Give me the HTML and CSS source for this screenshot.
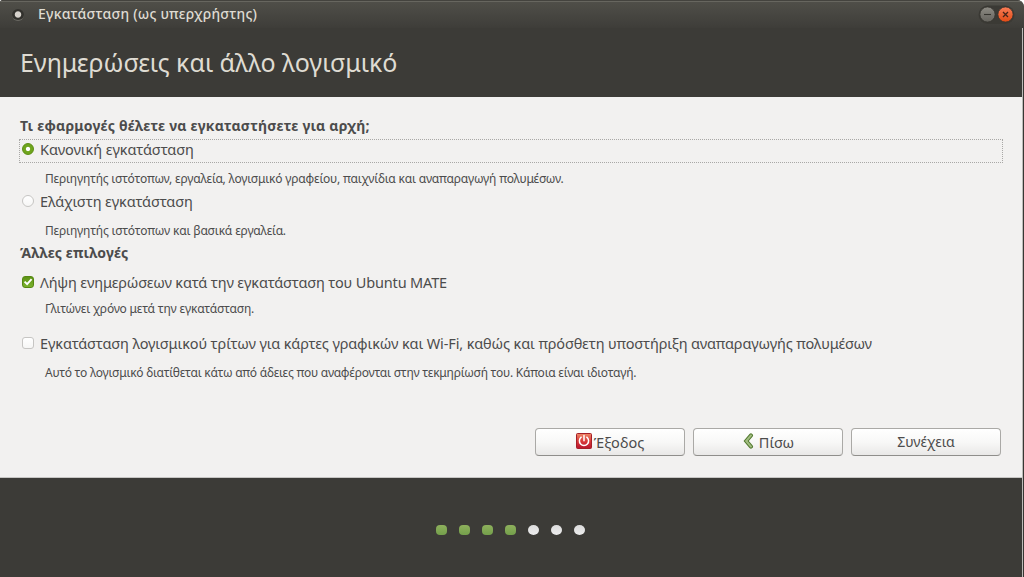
FILE: index.html
```html
<!DOCTYPE html>
<html lang="el">
<head>
<meta charset="utf-8">
<title>Εγκατάσταση (ως υπερχρήστης)</title>
<link rel="stylesheet" href="styles.css">
</head>
<body>
<div class="window">
  <div class="titlebar">
    <span class="menu-dot"></span>
    <span class="caption">Εγκατάσταση (ως υπερχρήστης)</span>
    <svg class="controls" width="40" height="20" viewBox="0 0 40 20">
      <defs>
        <linearGradient id="grey" x1="0" y1="0" x2="0" y2="1"><stop offset="0" stop-color="#8d8b84"/><stop offset="1" stop-color="#65635d"/></linearGradient>
        <linearGradient id="orange" x1="0" y1="0" x2="0" y2="1"><stop offset="0" stop-color="#f97d57"/><stop offset="1" stop-color="#e24a14"/></linearGradient>
      </defs>
      <rect x="1.5" y="0.5" width="36" height="18.5" rx="9.2" fill="#3b3a35"/>
      <circle cx="10.5" cy="9.5" r="7.6" fill="url(#grey)" stroke="#35342f" stroke-width=".8"/>
      <path d="M7 9.5h7" stroke="#35342f" stroke-width="1.1"/>
      <circle cx="28.5" cy="9.5" r="7.6" fill="url(#orange)" stroke="#35342f" stroke-width=".8"/>
      <path d="M26 7l5 5M31 7l-5 5" stroke="#45241a" stroke-width="1.3"/>
    </svg>
  </div>
  <div class="body">
    <header class="header"><h1 class="heading">Ενημερώσεις και άλλο λογισμικό</h1></header>
    <main class="content">
      <h2 class="section apps"><span>Τι εφαρμογές θέλετε να εγκαταστήσετε για αρχή;</span></h2>
      <div class="option focused"><i class="radio on"></i><span class="t-normal">Κανονική εγκατάσταση</span></div>
      <p class="hint h-normal"><span>Περιηγητής ιστότοπων, εργαλεία, λογισμικό γραφείου, παιχνίδια και αναπαραγωγή πολυμέσων.</span></p>
      <div class="option minimal"><i class="radio"></i><span class="t-minimal">Ελάχιστη εγκατάσταση</span></div>
      <p class="hint h-minimal"><span>Περιηγητής ιστότοπων και βασικά εργαλεία.</span></p>
      <h2 class="section other"><span>Άλλες επιλογές</span></h2>
      <div class="option updates">
        <i class="check on"><svg width="12" height="12" viewBox="0 0 12 12"><path d="M2.6 5.6l2.5 2.6 4.5-5" fill="none" stroke="#fff" stroke-width="1.9"/></svg></i>
        <span class="t-updates">Λήψη ενημερώσεων κατά την εγκατάσταση του Ubuntu MATE</span>
      </div>
      <p class="hint h-updates"><span>Γλιτώνει χρόνο μετά την εγκατάσταση.</span></p>
      <div class="option third"><i class="check"></i><span class="t-third">Εγκατάσταση λογισμικού τρίτων για κάρτες γραφικών και Wi-Fi, καθώς και πρόσθετη υποστήριξη αναπαραγωγής πολυμέσων</span></div>
      <p class="hint h-third"><span>Αυτό το λογισμικό διατίθεται κάτω από άδειες που αναφέρονται στην τεκμηρίωσή του. Κάποια είναι ιδιοταγή.</span></p>
      <div class="actions">
        <button class="btn quit">
          <svg width="16" height="16" viewBox="0 0 16 16">
            <defs><linearGradient id="red" x1="0" y1="0" x2="0" y2="1"><stop offset="0" stop-color="#ee8a68"/><stop offset=".5" stop-color="#d93a3a"/><stop offset="1" stop-color="#b8152e"/></linearGradient></defs>
            <rect x=".5" y=".5" width="15" height="15" rx="1" fill="url(#red)" stroke="#a51f28"/>
            <path d="M5.2 4.2a4.6 4.6 0 1 0 5.6 0M8 2.6v5.2" fill="none" stroke="#fff" stroke-width="1.5" stroke-linecap="round"/>
          </svg><span class="b-quit">Έξοδος</span>
        </button>
        <button class="btn back">
          <svg width="16" height="16" viewBox="0 0 16 16"><path d="M9 2.4L4.2 8 9 13.6" fill="none" stroke="#537a30" stroke-width="4" stroke-linecap="round"/><path d="M9 2.4L4.2 8 9 13.6" fill="none" stroke="#a1bd80" stroke-width="2" stroke-linecap="round"/></svg><span class="b-back">Πίσω</span>
        </button>
        <button class="btn next"><span class="b-next">Συνέχεια</span></button>
      </div>
    </main>
    <footer class="footer">
      <i class="step done"></i><i class="step done"></i><i class="step done"></i><i class="step done"></i><i class="step"></i><i class="step"></i><i class="step"></i>
    </footer>
  </div>
</div>
</body>
</html>
```
FILE: styles.css
```css
* { box-sizing: border-box; }
body { margin: 0; background: #fff; font: 14px/20px "Noto Sans", "Open Sans", sans-serif; color: #4c4c4c; overflow: hidden; }
h1, h2, p { margin: 0; }
.window { width: 1024px; height: 577px; display: flex; flex-direction: column; background: #3c3b37; border-radius: 3px 7px 0 0; overflow: hidden; }
.titlebar { flex: none; height: 28px; display: flex; align-items: center; padding: 0 7px 0 12px; background: linear-gradient(#504f49, #3e3d39 27px); border-top: 1px solid #44433e; box-shadow: inset 0 1px #67665f; }
.menu-dot { width: 12px; height: 12px; border-radius: 50%; background: radial-gradient(circle, #d6d2cc 0 2.7px, #32312d 3.7px); border-bottom: 1px solid #6a6963; }
.caption { margin-left: 14px; padding-bottom: 2px; color: #dfdbd2; font-weight: 500; font-size: 14px; letter-spacing: .21px; white-space: nowrap; }
.controls { margin-left: auto; }
.body { flex: 1; display: flex; flex-direction: column; border-right: 1px solid #383733; box-shadow: inset -1px 0 #bdbcb9; }
.header { height: 69px; margin-right: 1px; padding: 17px 20px; background: #3c3b37; }
.heading { font-size: 25px; line-height: 34px; font-weight: 400; letter-spacing: -.07px; color: #dfdbd2; white-space: nowrap; }
.content { height: 381px; margin-right: 1px; padding: 19px 19px 0; background: #f2f1f0; border-bottom: 1px solid #c7c6c4; display: flex; flex-direction: column; }
.section { font-size: 14px; line-height: 20px; font-weight: 700; padding-left: 1px; letter-spacing: .22px; white-space: nowrap; }
.option { height: 24px; display: flex; align-items: center; padding: 0 0 2px 3px; font-size: 14.5px; white-space: nowrap; }
.option span { margin-left: 6px; }
.focused { margin-top: 3px; border: 1px dotted #a9a8a6; padding: 0 0 4px 2px; }
.t-normal { letter-spacing: -.08px; }
.t-minimal { letter-spacing: -.12px; }
.t-updates { letter-spacing: -.15px; }
.t-third { letter-spacing: -.13px; }
.hint { font-size: 12px; line-height: 16px; padding-left: 26px; letter-spacing: -.19px; white-space: nowrap; }
.h-normal { margin-top: 8px; }
.minimal { margin-top: 3px; }
.h-minimal { margin-top: 9px; letter-spacing: -.17px; }
.other { margin-top: 4px; letter-spacing: .14px; }
.updates { margin-top: 8px; }
.h-updates { margin-top: 6px; }
.third { margin-top: 15px; }
.h-third { margin-top: 9px; letter-spacing: -.235px; }
.radio, .check { flex: none; width: 12px; height: 12px; display: block; border: 1px solid #c6c5c3; background: linear-gradient(#fff, #f6f6f5); }
.radio { border-radius: 50%; }
.check { border-radius: 3px; }
.radio.on { border-color: #5b8d12; background: radial-gradient(circle, #fff 0 1.7px, #6fa51d 2.6px); }
.check.on { border-color: #568812; background: linear-gradient(#5d9315, #7bb22c); }
.check svg { display: block; margin: -1px; }
.actions { display: flex; justify-content: flex-end; gap: 8px; margin: 47px 2px 0 0; }
.btn { width: 150px; height: 28px; padding: 0; display: flex; align-items: center; justify-content: center; border: 1px solid #aaa9a6; border-bottom-color: #8f8e8b; border-radius: 4px; background: linear-gradient(#fff, #f8f8f7 50%, #e9e8e7); font: 14px/20px "Noto Sans", sans-serif; color: #4c4c4c; }
.quit { font-size: 14.5px; }
.quit svg { margin: -2px 2px 0 0; }
.back { font-size: 14.5px; }
.back svg { margin: -2px 1px 0 0; }
.b-quit, .b-back { padding-bottom: 1px; }
.footer { flex: 1; display: flex; gap: 12px; padding: 47px 0 0 436px; }
.step { width: 11px; height: 10px; border-radius: 50%; background: linear-gradient(#dcdcdc, #ececec); }
.step.done { border-radius: 4px; background: linear-gradient(#8eb05c, #74a04b); }
```
